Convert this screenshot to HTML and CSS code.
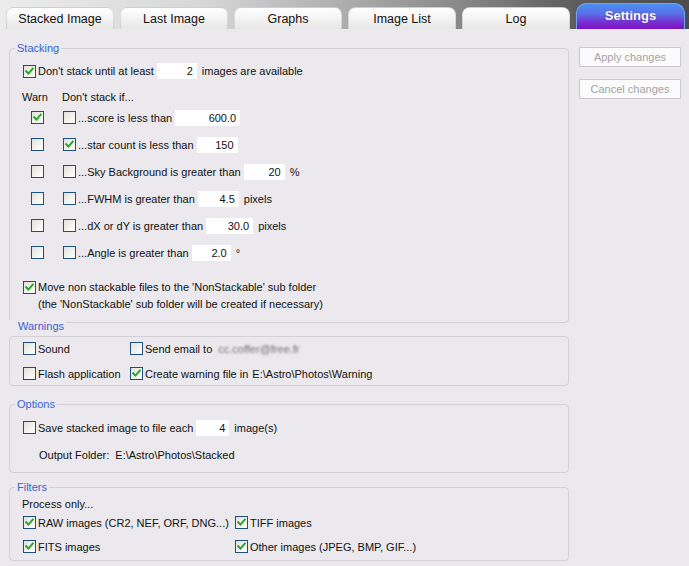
FILE: index.html
```html
<!DOCTYPE html>
<html>
<head>
<meta charset="utf-8">
<link rel="stylesheet" href="styles.css">
</head>
<body>
<div class="app">
  <div class="tabbar">
    <div class="tab">Stacked Image</div>
    <div class="tab">Last Image</div>
    <div class="tab">Graphs</div>
    <div class="tab">Image List</div>
    <div class="tab">Log</div>
    <div class="tab active">Settings</div>
  </div>
  <div class="main">
    <div class="panel">
      <fieldset class="group stacking">
        <legend>Stacking</legend>
        <div class="inner">
          <div class="row">
            <span class="cb on"><svg viewBox="0 0 11 11"><path d="M2.2 5.2 L4.4 7.6 L8.8 2.6"/></svg></span>
            <span class="lbl">Don't stack until at least</span>
            <span class="num w-until">2</span>
            <span class="lbl after">images are available</span>
          </div>
          <div class="cond-head"><span class="warn-h">Warn</span><span>Don't stack if...</span></div>
          <div class="cond">
            <span class="cb warn on"><svg viewBox="0 0 11 11"><path d="M2.2 5.2 L4.4 7.6 L8.8 2.6"/></svg></span>
            <span class="cb stop"></span>
            <span class="lbl">...score is less than</span>
            <span class="num w-score">600.0</span>
          </div>
          <div class="cond">
            <span class="cb warn"></span>
            <span class="cb stop on"><svg viewBox="0 0 11 11"><path d="M2.2 5.2 L4.4 7.6 L8.8 2.6"/></svg></span>
            <span class="lbl">...star count is less than</span>
            <span class="num w-star">150</span>
          </div>
          <div class="cond">
            <span class="cb warn"></span>
            <span class="cb stop"></span>
            <span class="lbl">...Sky Background is greater than</span>
            <span class="num w-sky">20</span>
            <span class="lbl after">%</span>
          </div>
          <div class="cond">
            <span class="cb warn"></span>
            <span class="cb stop"></span>
            <span class="lbl">...FWHM is greater than</span>
            <span class="num w-fwhm">4.5</span>
            <span class="lbl after">pixels</span>
          </div>
          <div class="cond">
            <span class="cb warn"></span>
            <span class="cb stop"></span>
            <span class="lbl">...dX or dY is greater than</span>
            <span class="num w-dxy">30.0</span>
            <span class="lbl after">pixels</span>
          </div>
          <div class="cond">
            <span class="cb warn"></span>
            <span class="cb stop"></span>
            <span class="lbl">...Angle is greater than</span>
            <span class="num w-angle">2.0</span>
            <span class="lbl after deg">°</span>
          </div>
          <div class="move">
            <span class="cb on"><svg viewBox="0 0 11 11"><path d="M2.2 5.2 L4.4 7.6 L8.8 2.6"/></svg></span>
            <div class="move-text">
              <div>Move non stackable files to the 'NonStackable' sub folder</div>
              <div>(the 'NonStackable' sub folder will be created if necessary)</div>
            </div>
          </div>
        </div>
      </fieldset>

      <div class="group-title">Warnings</div>
      <div class="box warnings">
        <div class="pair">
          <div class="row"><span class="cb"></span><span class="lbl">Sound</span></div>
          <div class="row"><span class="cb"></span><span class="lbl">Send email to</span><span class="blur">cc.coffer@free.fr</span></div>
          <div class="row"><span class="cb"></span><span class="lbl">Flash application</span></div>
          <div class="row"><span class="cb on"><svg viewBox="0 0 11 11"><path d="M2.2 5.2 L4.4 7.6 L8.8 2.6"/></svg></span><span class="lbl">Create warning file in</span><span class="path">E:\Astro\Photos\Warning</span></div>
        </div>
      </div>

      <fieldset class="group options">
        <legend>Options</legend>
        <div class="inner">
          <div class="row">
            <span class="cb"></span>
            <span class="lbl">Save stacked image to file each</span>
            <span class="num w-each">4</span>
            <span class="lbl after">image(s)</span>
          </div>
          <div class="row folder">
            <span>Output Folder:</span><span class="path">E:\Astro\Photos\Stacked</span>
          </div>
        </div>
      </fieldset>

      <fieldset class="group filters">
        <legend>Filters</legend>
        <div class="inner">
          <div class="process">Process only...</div>
          <div class="fgrid">
            <div class="row"><span class="cb on"><svg viewBox="0 0 11 11"><path d="M2.2 5.2 L4.4 7.6 L8.8 2.6"/></svg></span><span class="lbl">RAW images (CR2, NEF, ORF, DNG...)</span></div>
            <div class="row"><span class="cb on"><svg viewBox="0 0 11 11"><path d="M2.2 5.2 L4.4 7.6 L8.8 2.6"/></svg></span><span class="lbl">TIFF images</span></div>
            <div class="row"><span class="cb on"><svg viewBox="0 0 11 11"><path d="M2.2 5.2 L4.4 7.6 L8.8 2.6"/></svg></span><span class="lbl">FITS images</span></div>
            <div class="row"><span class="cb on"><svg viewBox="0 0 11 11"><path d="M2.2 5.2 L4.4 7.6 L8.8 2.6"/></svg></span><span class="lbl">Other images (JPEG, BMP, GIF...)</span></div>
          </div>
        </div>
      </fieldset>
    </div>
    <div class="side">
      <button class="btn">Apply changes</button>
      <button class="btn">Cancel changes</button>
    </div>
  </div>
</div>
</body>
</html>
```

FILE: styles.css
```css
* { box-sizing: border-box; }
html, body { margin: 0; padding: 0; }
body {
  width: 689px;
  height: 566px;
  overflow: hidden;
  background: #ebe9ed;
  font-family: "Liberation Sans", Arial, sans-serif;
  font-size: 11px;
  color: #111;
}

.tabbar {
  height: 29px;
  display: flex;
  align-items: flex-end;
  gap: 6px;
  padding-left: 6px;
  background: linear-gradient(to right, #ececec 0%, #d6d6d6 30%, #adadad 50%, #8a8a8a 66%, #5c5c5c 84%, #4b4b4b 100%);
}
.tab {
  width: 108px;
  height: 22px;
  line-height: 22px;
  text-align: center;
  font-size: 12.5px;
  color: #111;
  border-radius: 8px 8px 0 0;
  background: linear-gradient(#ffffff 0%, #f7f7f7 35%, #e6e6e6 100%);
  border: 1px solid rgba(0,0,0,0.10);
  border-bottom: none;
}
.tab.active {
  width: 109px;
  height: 26px;
  line-height: 23px;
  font-size: 13px;
  font-weight: bold;
  color: #fff;
  text-shadow: 0 0 1px rgba(40,0,90,0.6);
  border-radius: 10px 10px 0 0;
  background: linear-gradient(#4a90f4 0%, #5a6ee6 40%, #7a2cd0 75%, #7a12c2 100%);
  border: 1px solid #6fa6f2;
  border-bottom: none;
}

.main {
  display: flex;
  padding-left: 9px;
}
.panel {
  width: 560px;
  display: flex;
  flex-direction: column;
}
.side {
  margin-left: 10px;
  width: 102px;
  display: flex;
  flex-direction: column;
}
.btn {
  height: 20px;
  margin-top: 18px;
  padding: 0;
  background: #fbfbfc;
  border: 1px solid #c9c8cc;
  border-radius: 1px;
  color: #a2a2a6;
  font-family: "Liberation Sans", Arial, sans-serif;
  font-size: 11px;
}
.btn + .btn { margin-top: 12px; }

/* group boxes */
fieldset.group {
  margin: 0;
  padding: 0;
  min-width: 0;
  border: 1px solid #d3d1d6;
  border-radius: 4px;
}
fieldset.group legend {
  margin-left: 5px;
  padding: 0 2px;
  line-height: 13px;
  font-size: 11px;
  color: #3a62cc;
}
.stacking { margin-top: 13px !important; }
.stacking .inner { padding: 7px 0 9px 13px; }

.row {
  display: flex;
  align-items: center;
  height: 18px;
  white-space: nowrap;
}
.lbl { margin-left: 2px; }
.lbl.after { margin-left: 5px; }
.deg { margin-left: 4px; }

.cb {
  flex: none;
  width: 13px;
  height: 13px;
  border: 1px solid #1f4f7e;
  background: linear-gradient(135deg, #e2e2dc 0%, #f4f4f0 60%, #ffffff 100%);
  display: inline-flex;
}
.cb svg { width: 11px; height: 11px; }
.cb svg path {
  fill: none;
  stroke: #24a424;
  stroke-width: 1.9;
  stroke-linecap: square;
}

.num {
  flex: none;
  height: 16px;
  line-height: 16px;
  background: #fff;
  text-align: right;
  padding-right: 4px;
  margin-left: 3px;
}
.w-until { width: 40px; }
.w-score { width: 65px; }
.w-star { width: 41px; }
.w-sky { width: 41px; }
.w-fwhm { width: 41px; }
.w-dxy { width: 47px; }
.w-angle { width: 39px; }
.w-each { width: 33px; }

.cond-head {
  margin-top: 11px;
  height: 13px;
  line-height: 13px;
  display: flex;
  margin-left: -1px;
}
.warn-h { width: 40px; }

.cond {
  display: flex;
  align-items: center;
  height: 27px;
  white-space: nowrap;
}
.cb.warn { margin-left: 8px; }
.cb.stop { margin-left: 19px; }
.cond .lbl { margin-left: 2px; }
.cond .lbl.after { margin-left: 5px; }

.move {
  margin-top: 13px;
  display: flex;
  align-items: flex-start;
}
.move .cb { margin-top: 2px; }
.move-text { margin-left: 2px; line-height: 17px; }

/* warnings */
.group-title {
  width: fit-content;
  margin-top: -3px;
  padding: 0 2px 0 9px;
  line-height: 13px;
  color: #3a62cc;
  background: #ebe9ed;
}
.box {
  margin-top: 3px;
  border: 1px solid #d3d1d6;
  border-radius: 4px;
}
.warnings { padding: 3px 0 3px 13px; }
.pair {
  display: grid;
  grid-template-columns: 107px auto;
  row-gap: 8px;
}
.pair .row { height: 17px; }
.pair .lbl { margin-left: 2px; }
.blur {
  margin-left: 6px;
  color: #6f6e74;
  filter: blur(1.3px);
}
.path { margin-left: 4px; }

/* options */
.options { margin-top: 12px !important; }
.options .inner { padding: 8px 0 9px 13px; }
.options .row { height: 17px; }
.options .row + .row { margin-top: 10px; }
.options .lbl { margin-left: 2px; }
.options .lbl.after { margin-left: 5px; }
.folder { padding-left: 16px; }
.folder .path { margin-left: 6px; }

/* filters */
.filters { margin-top: 8px !important; }
.filters .inner { padding: 4px 0 5px 13px; }
.process { line-height: 13px; margin-left: -1px; }
.fgrid {
  margin-top: 3px;
  display: grid;
  grid-template-columns: 212px auto;
  row-gap: 7px;
}
.fgrid .row { height: 17px; }
.fgrid .lbl { margin-left: 2px; }
```
